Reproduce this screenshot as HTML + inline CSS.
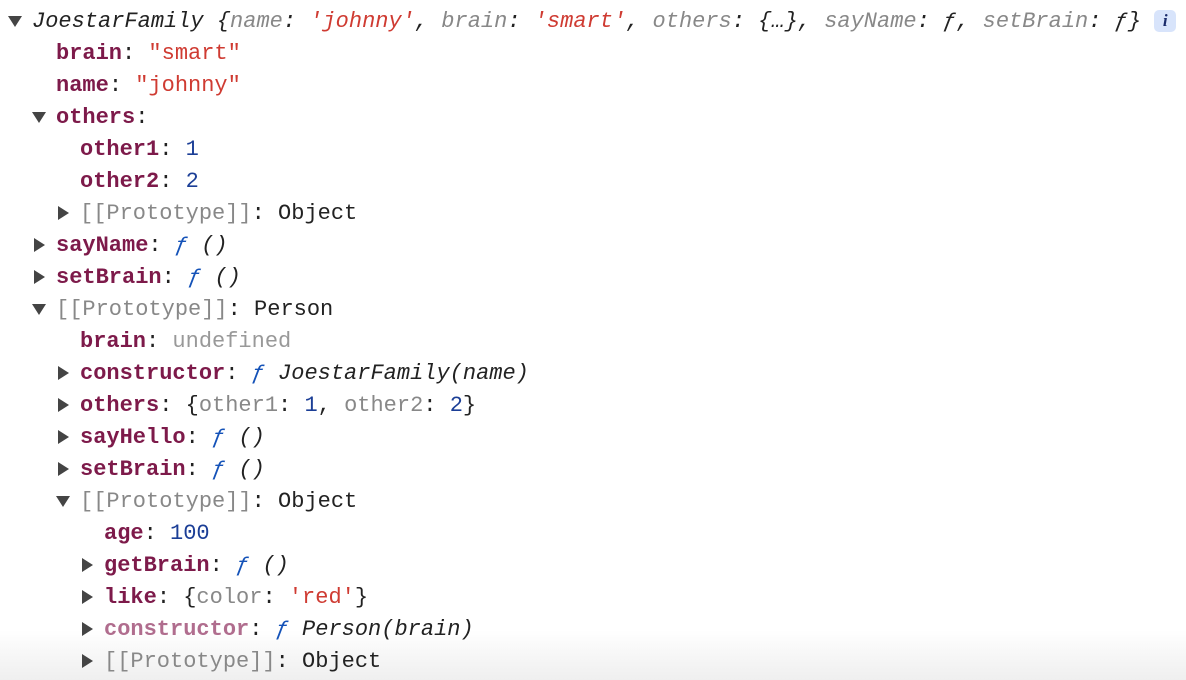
<!DOCTYPE html>
<html><head><meta charset="utf-8"><style>
html,body{margin:0;padding:0;background:#fff;width:1186px;height:680px;overflow:hidden;position:relative}
.r{position:absolute;z-index:1;height:32px;line-height:32px;font-family:"Liberation Mono","DejaVu Sans Mono",monospace;font-size:22px;color:#222;white-space:pre}
.k{color:#7d1a4a;font-weight:bold}
.kd{color:#b06d8e;font-weight:bold}
.s{color:#cf3b32}
.n{color:#1b3e96}
.g{color:#888}
.i{font-style:italic}
.f{color:#1452b8;font-style:italic}
.ad,.ar{position:absolute;width:0;height:0}
.ad{border-left:7px solid transparent;border-right:7px solid transparent;border-top:11px solid #444;top:10px}
.ar{border-top:7px solid transparent;border-bottom:7px solid transparent;border-left:11px solid #444;top:8px}
.fade{position:absolute;z-index:0;left:0;right:0;bottom:0;height:50px;background:linear-gradient(#fff,#efefef)}
.info{display:inline-block;width:22px;height:22px;background:#d8e4fb;border-radius:5px;color:#1a2b6b;font-size:17px;line-height:22px;text-align:center;vertical-align:middle;font-style:italic;font-family:"Liberation Serif",serif;font-weight:bold}
</style></head><body>
<div class="r" style="top:6px;left:32px"><span class="ad" style="left:-24px"></span><span class="i">JoestarFamily {<span class="g">name</span>: <span class="s">'johnny'</span>, <span class="g">brain</span>: <span class="s">'smart'</span>, <span class="g">others</span>: {…}, <span class="g">sayName</span>: ƒ, <span class="g">setBrain</span>: ƒ}</span> <span class="info">i</span></div>
<div class="r" style="top:38px;left:56px"><span class="k">brain</span>: <span class="s">"smart"</span></div>
<div class="r" style="top:70px;left:56px"><span class="k">name</span>: <span class="s">"johnny"</span></div>
<div class="r" style="top:102px;left:56px"><span class="ad" style="left:-24px"></span><span class="k">others</span>:</div>
<div class="r" style="top:134px;left:80px"><span class="k">other1</span>: <span class="n">1</span></div>
<div class="r" style="top:166px;left:80px"><span class="k">other2</span>: <span class="n">2</span></div>
<div class="r" style="top:198px;left:80px"><span class="ar" style="left:-22px"></span><span class="g">[[Prototype]]</span>: Object</div>
<div class="r" style="top:230px;left:56px"><span class="ar" style="left:-22px"></span><span class="k">sayName</span>: <span class="f">ƒ</span> <span class="i">()</span></div>
<div class="r" style="top:262px;left:56px"><span class="ar" style="left:-22px"></span><span class="k">setBrain</span>: <span class="f">ƒ</span> <span class="i">()</span></div>
<div class="r" style="top:294px;left:56px"><span class="ad" style="left:-24px"></span><span class="g">[[Prototype]]</span>: Person</div>
<div class="r" style="top:326px;left:80px"><span class="k">brain</span>: <span class="g" style="color:#999">undefined</span></div>
<div class="r" style="top:358px;left:80px"><span class="ar" style="left:-22px"></span><span class="k">constructor</span>: <span class="f">ƒ</span> <span class="i">JoestarFamily(name)</span></div>
<div class="r" style="top:390px;left:80px"><span class="ar" style="left:-22px"></span><span class="k">others</span>: {<span class="g">other1</span>: <span class="n">1</span>, <span class="g">other2</span>: <span class="n">2</span>}</div>
<div class="r" style="top:422px;left:80px"><span class="ar" style="left:-22px"></span><span class="k">sayHello</span>: <span class="f">ƒ</span> <span class="i">()</span></div>
<div class="r" style="top:454px;left:80px"><span class="ar" style="left:-22px"></span><span class="k">setBrain</span>: <span class="f">ƒ</span> <span class="i">()</span></div>
<div class="r" style="top:486px;left:80px"><span class="ad" style="left:-24px"></span><span class="g">[[Prototype]]</span>: Object</div>
<div class="r" style="top:518px;left:104px"><span class="k">age</span>: <span class="n">100</span></div>
<div class="r" style="top:550px;left:104px"><span class="ar" style="left:-22px"></span><span class="k">getBrain</span>: <span class="f">ƒ</span> <span class="i">()</span></div>
<div class="r" style="top:582px;left:104px"><span class="ar" style="left:-22px"></span><span class="k">like</span>: {<span class="g">color</span>: <span class="s">'red'</span>}</div>
<div class="r" style="top:614px;left:104px"><span class="ar" style="left:-22px"></span><span class="kd">constructor</span>: <span class="f">ƒ</span> <span class="i">Person(brain)</span></div>
<div class="r" style="top:646px;left:104px"><span class="ar" style="left:-22px"></span><span class="g">[[Prototype]]</span>: Object</div>
<div class="fade"></div>
</body></html>
